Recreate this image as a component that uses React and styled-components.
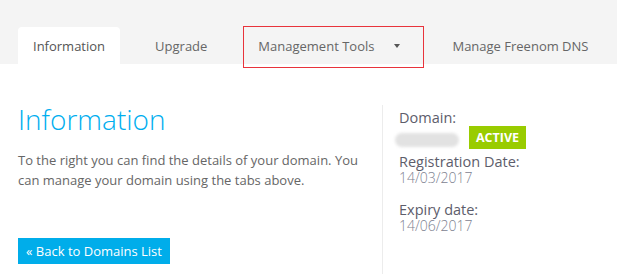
import React from "react";
import styled, { createGlobalStyle } from "styled-components";

const Global = createGlobalStyle`
  html, body { margin: 0; padding: 0; background: #fff; }
  body { font-family: "Open Sans", "Liberation Sans", sans-serif; }
`;

const TabBar = styled.nav`
  display: flex;
  align-items: flex-end;
  height: 64px;
  padding-left: 18px;
  background: #f4f4f4;
`;

const Tab = styled.div`
  position: relative;
  display: flex;
  align-items: center;
  height: 37px;
  padding: 0 ${(p) => p.$pr}px 0 ${(p) => p.$pl}px;
  font-size: 13px;
  color: ${(p) => (p.$active ? "#555" : "#666")};
  background: ${(p) => (p.$active ? "#fff" : "transparent")};
  border-radius: 4px 4px 0 0;
  white-space: nowrap;
  ${(p) =>
    p.$marked &&
    `
    &::after {
      content: "";
      position: absolute;
      left: 0; right: 0; top: -1px; bottom: -4px;
      border: 1px solid #e8333b;
    }
  `}
`;

const Caret = styled.span`
  display: inline-block;
  margin-left: 20px;
  width: 0;
  height: 0;
  border-left: 3.5px solid transparent;
  border-right: 3.5px solid transparent;
  border-top: 4px solid #555;
`;

const Main = styled.main`
  display: grid;
  grid-template-columns: 364px 1fr;
  padding: 39px 0 0 18px;
`;

const LeftCol = styled.section`
  display: flex;
  flex-direction: column;
  align-items: flex-start;
`;

const Heading = styled.h1`
  margin: 0;
  font-size: 28px;
  font-weight: 300;
  line-height: 33px;
  color: #00aeef;
`;

const Text = styled.p`
  margin: 14px 0 0;
  font-size: 13px;
  line-height: 20px;
  color: #666;
`;

const BackButton = styled.a`
  display: inline-block;
  margin-top: 48px;
  padding: 0 8px;
  height: 26px;
  line-height: 26px;
  font-size: 13px;
  color: #fff;
  background: #00adea;
  text-decoration: none;
`;

const RightCol = styled.aside`
  margin-top: 2px;
  min-height: 167px;
  padding: 5px 0 0 16px;
  border-left: 1px solid #ececec;
`;

const Label = styled.div`
  margin-top: ${(p) => p.$mt || 0}px;
  font-size: 14.5px;
  font-weight: 400;
  line-height: ${(p) => p.$lh || 17}px;
  color: #5d5d6b;
`;

const DateValue = styled.div`
  font-size: 14px;
  font-weight: 300;
  line-height: 16px;
  color: #7d8290;
`;

const DomainRow = styled.div`
  display: flex;
  align-items: center;
  height: 23px;
`;

const Blurred = styled.span`
  display: inline-block;
  width: 64px;
  height: 14px;
  margin-left: -4px;
  margin-top: 5px;
  border-radius: 8px;
  background: #e2e2e2;
  filter: blur(1.5px);
`;

const Badge = styled.span`
  margin-left: 10px;
  height: 23px;
  padding: 0 7px;
  line-height: 23px;
  font-size: 12.5px;
  font-weight: 700;
  color: #fff;
  background: #99cc00;
`;

export default function App() {
  return (
    <>
      <Global />
      <TabBar>
        <Tab $active $pl={15} $pr={15}>Information</Tab>
        <Tab $pl={35} $pr={36}>Upgrade</Tab>
        <Tab $marked $pl={15} $pr={24}>
          Management Tools
          <Caret />
        </Tab>
        <Tab $pl={28} $pr={16}>Manage Freenom DNS</Tab>
      </TabBar>
      <Main>
        <LeftCol>
          <Heading>Information</Heading>
          <Text>
            To the right you can find the details of your domain. You can manage your domain using the tabs above.
          </Text>
          <BackButton href="#">« Back to Domains List</BackButton>
        </LeftCol>
        <RightCol>
          <Label $lh={16}>Domain:</Label>
          <DomainRow>
            <Blurred />
            <Badge>ACTIVE</Badge>
          </DomainRow>
          <Label $mt={4}>Registration Date:</Label>
          <DateValue>14/03/2017</DateValue>
          <Label $mt={15}>Expiry date:</Label>
          <DateValue>14/06/2017</DateValue>
        </RightCol>
      </Main>
    </>
  );
}
